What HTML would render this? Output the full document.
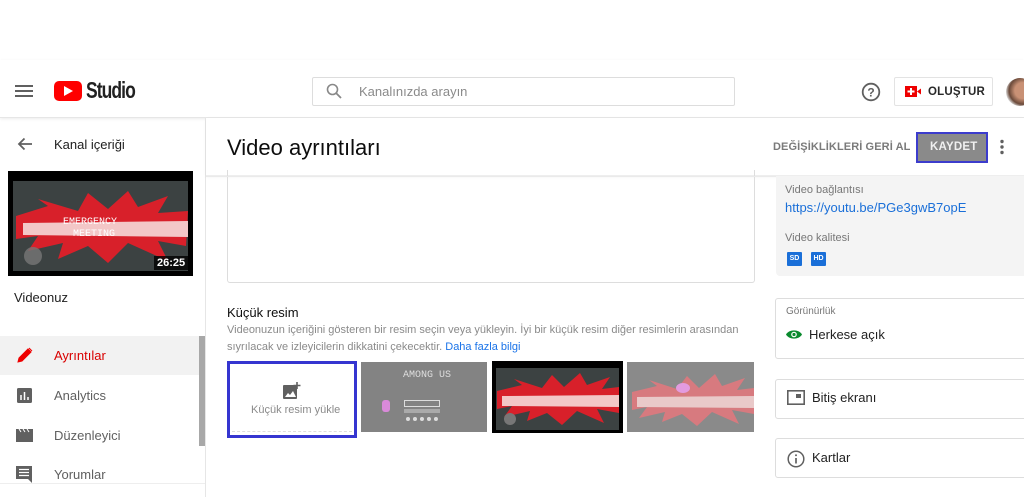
<!DOCTYPE html>
<html><head><meta charset="utf-8"><style>
*{margin:0;padding:0;box-sizing:border-box}
body{width:1024px;height:497px;overflow:hidden;background:#fff;font-family:"Liberation Sans",Arial,sans-serif;position:relative;color:#0d0d0d}
.a{position:absolute}
.t{white-space:nowrap}
.thumb{position:absolute;overflow:hidden}
</style></head><body>
<!-- header -->
<div class="a" style="left:0;top:60px;width:1024px;height:58px;border-bottom:1px solid #e6e6e6;box-shadow:0 1px 3px rgba(0,0,0,.08)"></div>
<svg class="a" style="left:15px;top:84px" width="18" height="14"><rect y="1" width="18" height="2" fill="#606060"/><rect y="6" width="18" height="2" fill="#606060"/><rect y="11" width="18" height="2" fill="#606060"/></svg>
<div class="a" style="left:54px;top:81px;width:28px;height:20px;background:#f00;border-radius:5px"></div>
<svg class="a" style="left:64px;top:86px" width="10" height="10"><path d="M0 0L9 5 0 10Z" fill="#fff"/></svg>
<div class="a t" style="left:86px;top:77px;font-size:23px;font-weight:bold;letter-spacing:-1.2px;transform:scaleX(.76);transform-origin:left;color:#212121">Studio</div>
<div class="a" style="left:312px;top:77px;width:423px;height:29px;border:1px solid #ddd;border-radius:2px"></div>
<svg class="a" style="left:326px;top:83px" width="16" height="16"><circle cx="6.5" cy="6.5" r="5" fill="none" stroke="#888" stroke-width="1.6"/><path d="M10 10l5 5" stroke="#888" stroke-width="1.8"/></svg>
<div class="a t" style="left:359px;top:84px;font-size:13px;color:#8a8a8a">Kanalınızda arayın</div>
<svg class="a" style="left:861px;top:82px" width="20" height="20"><circle cx="10" cy="10" r="8.3" fill="none" stroke="#606060" stroke-width="1.8"/><text x="10" y="14.5" font-size="12" font-weight="bold" text-anchor="middle" fill="#606060" font-family="Liberation Sans">?</text></svg>
<div class="a" style="left:894px;top:77px;width:99px;height:29px;border:1px solid #e3e3e3;border-radius:2px"></div>
<svg class="a" style="left:905px;top:86px" width="16" height="11"><rect width="12" height="11" fill="#e00"/><path d="M12 5.5l4-3v6z" fill="#e00"/><path d="M6 2v7M2.5 5.5h7" stroke="#fff" stroke-width="2"/></svg>
<div class="a t" style="left:928px;top:86px;font-size:11.5px;font-weight:bold;color:#282828;letter-spacing:.2px">OLUŞTUR</div>
<div class="a" style="left:1006px;top:78px;width:28px;height:28px;border-radius:50%;background:radial-gradient(circle at 60% 45%,#c99175 0 35%,#6b4a3a 60%,#ddd 75%)"></div>

<!-- sidebar -->
<div class="a" style="left:205px;top:118px;width:1px;height:379px;background:#e6e6e6"></div>
<svg class="a" style="left:17px;top:137px" width="16" height="14"><path d="M15 7H2M7.5 1.5L2 7l5.5 5.5" fill="none" stroke="#606060" stroke-width="1.8"/></svg>
<div class="a t" style="left:54px;top:137px;font-size:13px;color:#212121">Kanal içeriği</div>
<div class="thumb" style="left:8px;top:171px;width:185px;height:105px;background:#000">
 <div class="a" style="left:5px;top:10px;width:175px;height:90px;background:#3c4242"></div>
 <svg class="a" style="left:0;top:0" width="185" height="105"><path d="M8 45L40 35 30 28 70 40 80 22 100 38 120 20 130 36 160 25 150 42 180 40 178 75 150 70 160 90 120 72 100 92 80 75 50 88 55 72 20 80 30 65 8 68Z" fill="#d8202a"/><path d="M15 52L180 50 180 66 15 64Z" fill="#f3c7c7"/><circle cx="25" cy="85" r="9" fill="#777" opacity=".8"/></svg>
 <div class="a t" style="left:55px;top:46px;font-size:10px;color:#fff;font-family:'Liberation Mono'">EMERGENCY</div>
 <div class="a t" style="left:65px;top:58px;font-size:10px;color:#fff;font-family:'Liberation Mono'">MEETING</div>
 <div class="a t" style="left:146px;top:85px;background:rgba(0,0,0,.8);color:#fff;font-size:11px;font-weight:bold;padding:1px 3px">26:25</div>
</div>
<div class="a t" style="left:14px;top:290px;font-size:13px;color:#212121">Videonuz</div>
<div class="a" style="left:0;top:336px;width:200px;height:39px;background:#f2f2f2"></div>
<svg class="a" style="left:17px;top:347px" width="16" height="16"><path d="M1 15l1-4 9-9 3 3-9 9z M12 1l3 3" fill="#e00" stroke="#e00" stroke-width="1"/></svg>
<div class="a t" style="left:54px;top:348px;font-size:13px;color:#d90000">Ayrıntılar</div>
<svg class="a" style="left:17px;top:388px" width="15" height="15"><rect width="15" height="15" rx="1.5" fill="#606060"/><path d="M4 12V7M7.5 12V4M11 12V9" stroke="#fff" stroke-width="1.5"/></svg>
<div class="a t" style="left:54px;top:388px;font-size:13px;color:#606060">Analytics</div>
<svg class="a" style="left:16px;top:429px" width="17" height="13"><rect y="2" width="17" height="11" fill="#606060"/><path d="M0 0h17v3H0z" fill="#606060"/><path d="M3 0l2 3M7 0l2 3M11 0l2 3" stroke="#fff" stroke-width="1"/></svg>
<div class="a t" style="left:54px;top:428px;font-size:13px;color:#606060">Düzenleyici</div>
<svg class="a" style="left:16px;top:466px" width="16" height="17"><path d="M0 0h16v13H4l-0 0H16v4l-4-4H0z" fill="#606060"/><path d="M3 3.5h10M3 6.5h10M3 9.5h10" stroke="#fff" stroke-width="1.2"/></svg>
<div class="a t" style="left:54px;top:467px;font-size:13px;color:#606060">Yorumlar</div>
<div class="a" style="left:199px;top:336px;width:6px;height:110px;background:#a8a8a8"></div>
<div class="a" style="left:0;top:483px;width:205px;height:1px;background:#eee"></div>

<!-- title bar -->
<div class="a" style="left:206px;top:118px;width:818px;height:58px;border-bottom:1px solid #eee;box-shadow:0 1px 3px rgba(0,0,0,.06);background:#fff"></div>
<div class="a t" style="left:227px;top:135px;font-size:22px;color:#0d0d0d">Video ayrıntıları</div>
<div class="a t" style="left:773px;top:141px;font-size:11px;font-weight:bold;color:#7a7a7a;letter-spacing:.1px">DEĞİŞİKLİKLERİ GERİ AL</div>
<div class="a" style="left:916px;top:132px;width:72px;height:31px;border:2px solid #3c3ccc;background:#8a8a8a"></div>
<div class="a t" style="left:930px;top:141px;font-size:11.5px;font-weight:bold;color:#f0f0f0;letter-spacing:.2px">KAYDET</div>
<svg class="a" style="left:999px;top:139px" width="6" height="16"><circle cx="3" cy="2.5" r="1.7" fill="#606060"/><circle cx="3" cy="8" r="1.7" fill="#606060"/><circle cx="3" cy="13.5" r="1.7" fill="#606060"/></svg>

<!-- main -->
<div class="a" style="left:227px;top:170px;width:528px;height:113px;border:1px solid #ddd;border-top:none;border-radius:0 0 3px 3px"></div>
<div class="a" style="left:206px;top:176px;width:818px;height:1px;background:#eaeaea"></div>
<div class="a t" style="left:227px;top:305px;font-size:13px;color:#0d0d0d">Küçük resim</div>
<div class="a t" style="left:227px;top:324px;font-size:11px;color:#8a8a8a">Videonuzun içeriğini gösteren bir resim seçin veya yükleyin. İyi bir küçük resim diğer resimlerin arasından</div>
<div class="a t" style="left:227px;top:341px;font-size:11px;color:#8a8a8a">sıyrılacak ve izleyicilerin dikkatini çekecektir. <span style="color:#1a73e8">Daha fazla bilgi</span></div>
<div class="a" style="left:227px;top:361px;width:130px;height:77px;border:3px solid #3535d0;background:#fff"></div>
<div class="a" style="left:232px;top:431px;width:120px;border-top:1px dashed #ddd"></div>
<svg class="a" style="left:283px;top:382px" width="18" height="17"><rect y="3" width="14" height="14" rx="1" fill="#606060"/><path d="M2 15l3-4 2 2 3-4 3 6z" fill="#fff"/><path d="M14 0v7M10.5 3.5h7" stroke="#606060" stroke-width="1.6"/></svg>
<div class="a t" style="left:251px;top:404px;font-size:11px;color:#8a8a8a">Küçük resim yükle</div>
<div class="thumb" style="left:361px;top:362px;width:126px;height:70px;background:#838383">
 <div class="a t" style="left:42px;top:8px;font-size:10px;color:#ddd;font-family:'Liberation Mono'">AMONG US</div>
 <div class="a" style="left:43px;top:38px;width:36px;height:7px;border:1px solid #ddd"></div>
 <div class="a" style="left:43px;top:47px;width:36px;height:4px;background:#aaa"></div>
 <div class="a" style="left:21px;top:38px;width:8px;height:12px;background:#d98ad9;border-radius:3px"></div>
 <div class="a" style="left:45px;top:55px;width:32px;height:4px;border-top:4px dotted #ddd"></div>
</div>
<div class="thumb" style="left:492px;top:361px;width:131px;height:72px;background:#000">
 <svg width="131" height="72"><rect x="4" y="7" width="123" height="62" fill="#3c4242"/><path d="M5 30L30 24 22 18 50 27 60 14 72 26 88 12 95 24 118 16 110 28 127 26 127 52 105 48 112 62 85 50 70 64 55 52 35 60 38 50 12 56 20 45 5 48Z" fill="#d8202a"/><path d="M10 35L127 34 127 46 10 45Z" fill="#f3c7c7"/><circle cx="18" cy="58" r="6" fill="#777"/></svg>
</div>
<div class="thumb" style="left:627px;top:362px;width:127px;height:70px;background:#8a8a8a">
 <svg width="127" height="70"><path d="M5 30L30 24 22 18 50 27 60 14 72 26 88 12 95 24 118 16 110 28 127 26 127 52 105 48 112 62 85 50 70 64 55 52 35 60 38 50 12 56 20 45 5 48Z" fill="#d77a7f"/><path d="M10 35L127 34 127 46 10 45Z" fill="#e9c9c9"/><ellipse cx="56" cy="26" rx="7" ry="5" fill="#e39be0"/></svg>
</div>

<!-- right panel -->
<div class="a" style="left:776px;top:176px;width:248px;height:100px;background:#f4f4f4;border-radius:0 0 0 4px"></div>
<div class="a t" style="left:785px;top:184px;font-size:11px;color:#777">Video bağlantısı</div>
<div class="a t" style="left:785px;top:200px;font-size:13px;color:#1a6fd8">https://youtu.be/PGe3gwB7opE</div>
<div class="a t" style="left:785px;top:232px;font-size:11px;color:#777">Video kalitesi</div>
<div class="a t" style="left:787px;top:252px;width:15px;height:14px;background:#1a6fd8;color:#fff;font-size:7px;font-weight:bold;text-align:center;line-height:14px;border-radius:1px">SD</div>
<div class="a t" style="left:811px;top:252px;width:15px;height:14px;background:#1a6fd8;color:#fff;font-size:7px;font-weight:bold;text-align:center;line-height:14px;border-radius:1px">HD</div>
<div class="a" style="left:775px;top:298px;width:260px;height:61px;border:1px solid #ddd;border-radius:3px"></div>
<div class="a t" style="left:786px;top:306px;font-size:10px;color:#777">Görünürlük</div>
<svg class="a" style="left:786px;top:329px" width="16" height="11"><path d="M0 5.5C3 0 13 0 16 5.5 13 11 3 11 0 5.5Z" fill="#0a8a2e"/><circle cx="8" cy="5.5" r="2.8" fill="#fff"/><circle cx="8" cy="5.5" r="1.6" fill="#0a8a2e"/></svg>
<div class="a t" style="left:809px;top:327px;font-size:13px;color:#212121">Herkese açık</div>
<div class="a" style="left:775px;top:379px;width:260px;height:40px;border:1px solid #ddd;border-radius:3px"></div>
<svg class="a" style="left:787px;top:390px" width="18" height="15"><rect x=".8" y=".8" width="16.4" height="13.4" fill="none" stroke="#606060" stroke-width="1.6"/><rect x="9" y="4" width="5" height="4" fill="#606060"/></svg>
<div class="a t" style="left:812px;top:390px;font-size:13px;color:#212121">Bitiş ekranı</div>
<div class="a" style="left:775px;top:438px;width:260px;height:40px;border:1px solid #ddd;border-radius:3px"></div>
<svg class="a" style="left:787px;top:450px" width="18" height="18"><circle cx="9" cy="9" r="7.8" fill="none" stroke="#606060" stroke-width="1.5"/><path d="M9 8v5.5" stroke="#606060" stroke-width="1.7"/><circle cx="9" cy="5.3" r="1" fill="#606060"/></svg>
<div class="a t" style="left:812px;top:450px;font-size:13px;color:#212121">Kartlar</div>
</body></html>
